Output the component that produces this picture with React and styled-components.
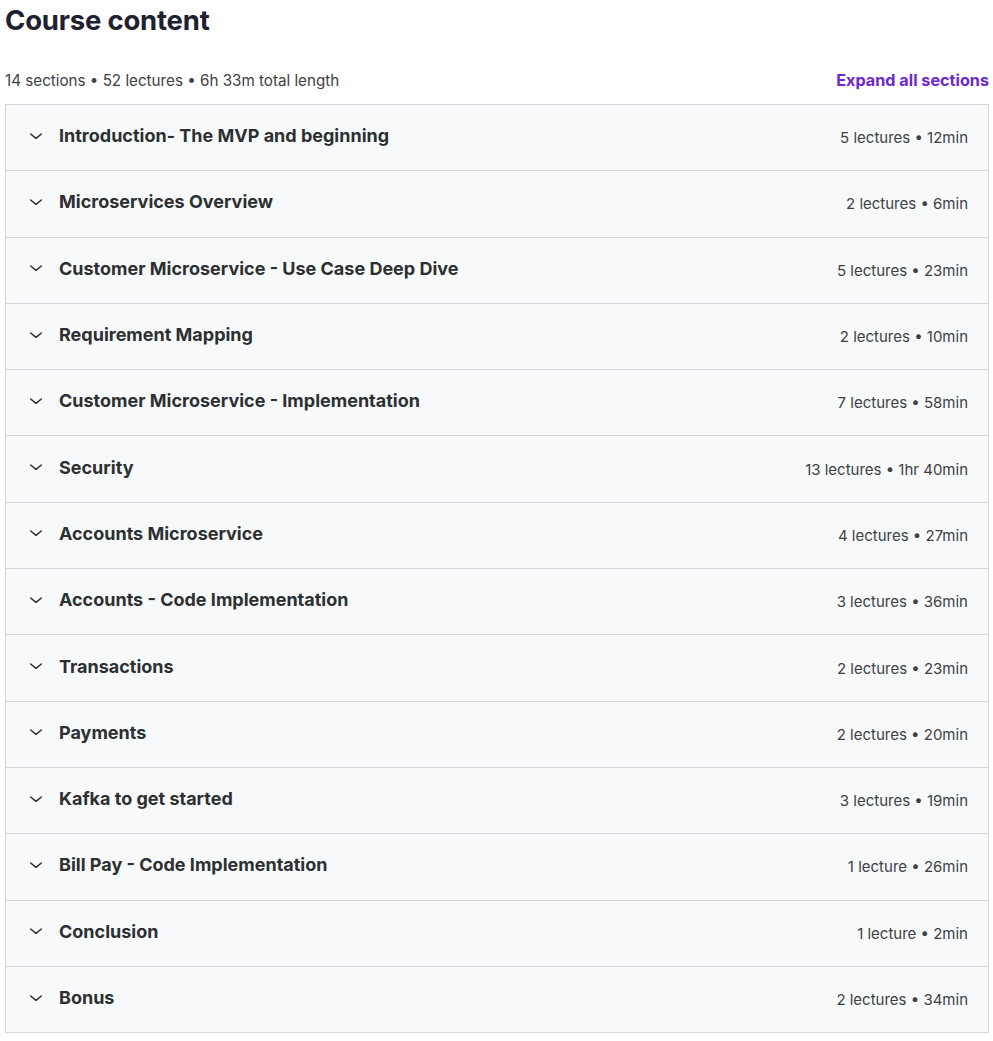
import React from 'react';
import styled, { createGlobalStyle } from 'styled-components';

const sections = [
    { title: 'Introduction- The MVP and beginning', meta: '5 lectures • 12min' },
    { title: 'Microservices Overview', meta: '2 lectures • 6min' },
    { title: 'Customer Microservice - Use Case Deep Dive', meta: '5 lectures • 23min' },
    { title: 'Requirement Mapping', meta: '2 lectures • 10min' },
    { title: 'Customer Microservice - Implementation', meta: '7 lectures • 58min' },
    { title: 'Security', meta: '13 lectures • 1hr 40min' },
    { title: 'Accounts Microservice', meta: '4 lectures • 27min' },
    { title: 'Accounts - Code Implementation', meta: '3 lectures • 36min' },
    { title: 'Transactions', meta: '2 lectures • 23min' },
    { title: 'Payments', meta: '2 lectures • 20min' },
    { title: 'Kafka to get started', meta: '3 lectures • 19min' },
    { title: 'Bill Pay - Code Implementation', meta: '1 lecture • 26min' },
    { title: 'Conclusion', meta: '1 lecture • 2min' },
    { title: 'Bonus', meta: '2 lectures • 34min' },
];

const GlobalStyle = createGlobalStyle`
    body {
        margin: 0;
        background: #ffffff;
        font-family: Inter, "Noto Sans", sans-serif;
        color: #2d2f31;
    }
`;

function Chevron () {
    return (
        <svg width="16" height="16" viewBox="0 0 24 24" fill="none" stroke="#2d2f31" strokeWidth="2.2" strokeLinecap="round" strokeLinejoin="round">
            <polyline points="4 9 12 15.5 20 9" />
        </svg>
    );
}

function App () {
    return (
        <Wrapper>
            <GlobalStyle />
            <Title>Course content</Title>

            <Summary>
                <span>14 sections • 52 lectures • 6h 33m total length</span>
                <ExpandButton>Expand all sections</ExpandButton>
            </Summary>

            <Panel>
                { sections.map((item) => {
                    return (
                        <Row key={item.title}>
                            <Toggle><Chevron /></Toggle>
                            <SectionTitle>{ item.title }</SectionTitle>
                            <Meta>{ item.meta }</Meta>
                        </Row>
                    );
                }) }
            </Panel>
        </Wrapper>
    );
}

const Wrapper = styled.div`
    padding: 0 4px 0 5px;
`;

const Title = styled.h2`
    margin: 0;
    padding-top: 4px;
    font-size: 27.5px;
    line-height: 32px;
    font-weight: 700;
    letter-spacing: -0.2px;
    color: #1f2130;
`;

const Summary = styled.div`
    display: flex;
    align-items: center;
    justify-content: space-between;
    height: 32px;
    margin-top: 28px;
    margin-bottom: 8px;
    font-size: 15.2px;
    color: #3e4143;
`;

const ExpandButton = styled.button`
    border: none;
    background: transparent;
    padding: 0;
    font-family: inherit;
    font-size: 16.2px;
    font-weight: 700;
    color: #6d28d2;
    cursor: pointer;
`;

const Panel = styled.div`
    border: 1px solid #d1d7dc;
    border-bottom: none;
`;

const Row = styled.div`
    display: flex;
    align-items: center;
    height: 65.3px;
    padding: 0 20px 0 22px;
    background: #f7f9fa;
    border-bottom: 1px solid #d1d7dc;
    box-sizing: content-box;
`;

const Toggle = styled.span`
    display: flex;
    align-items: center;
    width: 31px;
    margin-top: -4px;
`;

const SectionTitle = styled.span`
    flex: 1;
    font-size: 18px;
    font-weight: 700;
    margin-top: -4px;
    color: #2d2f31;
`;

const Meta = styled.span`
    font-size: 15px;
    color: #3e4143;
`;

export default App;
